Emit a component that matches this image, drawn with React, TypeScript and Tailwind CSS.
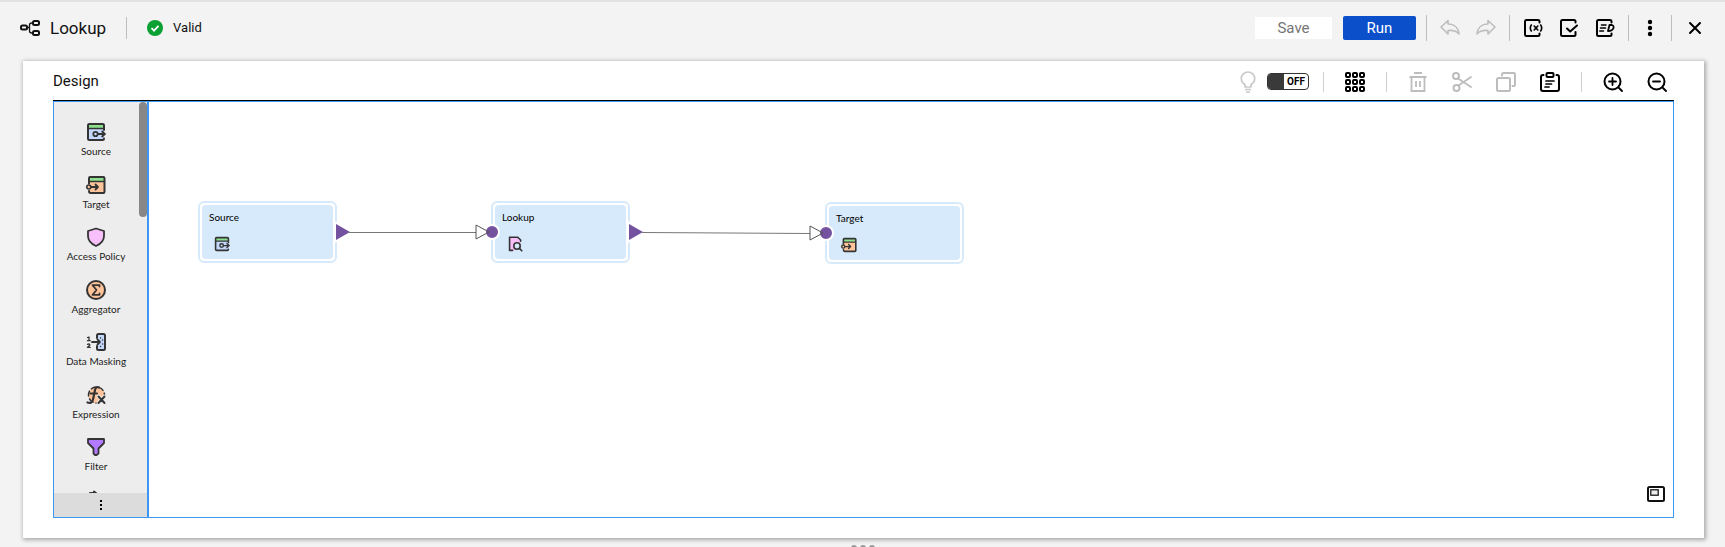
import React from "react";

type Children = { children: React.ReactNode };

function Glyph({ children, className = "size-5", box = "0 0 20 20" }: Children & { className?: string; box?: string }) {
  return (
    <svg
      viewBox={box}
      className={className}
      fill="none"
      stroke="currentColor"
      strokeWidth={2}
      strokeLinecap="round"
      strokeLinejoin="round"
      aria-hidden="true"
    >
      {children}
    </svg>
  );
}

function ToolButton({ label, disabled, children }: Children & { label: string; disabled?: boolean }) {
  return (
    <button
      type="button"
      aria-label={label}
      disabled={disabled}
      className="flex size-5 shrink-0 items-center justify-center text-black disabled:text-[#bdbdbd]"
    >
      {children}
    </button>
  );
}

function Divider({ className }: { className: string }) {
  return <span className={`w-px shrink-0 ${className}`} />;
}

const ink = "#343434";

function SourceIcon({ className }: { className?: string }) {
  return (
    <Glyph className={className}>
      <rect x="2" y="2" width="16" height="16" rx="1.5" fill="#c3d8fb" stroke="none" />
      <path d="M2 2h16v4H2z" fill="#8ee08e" stroke="none" />
      <path d="M18 8V3.2Q18 2 16.8 2H3.2Q2 2 2 3.200V16.800Q2 18 3.200 18H16.800Q18 18 18 16.500" stroke={ink} />
      <path d="M2 6.500H18" stroke={ink} strokeWidth="1.500" />
      <circle cx="9.500" cy="12" r="2.200" stroke={ink} strokeWidth="1.800" fill="#c3d8fb" />
      <path d="M12 12h7M16.200 9.500L18.800 12L16.200 14.500" stroke={ink} strokeWidth="1.800" />
    </Glyph>
  );
}

function TargetIcon({ className }: { className?: string }) {
  return (
    <Glyph className={className}>
      <rect x="3" y="2" width="15.500" height="16" rx="1.500" fill="#ffc49a" stroke="none" />
      <path d="M3 2h15v4H3z" fill="#8ee08e" stroke="none" />
      <path d="M3 8.500V3.200Q3 2 4.200 2H17.300Q18.500 2 18.500 3.200V16.800Q18.500 18 17.300 18H4.500Q3 18 3 16" stroke={ink} />
      <path d="M3 6.500H18" stroke={ink} strokeWidth="1.500" />
      <circle cx="2.800" cy="12" r="2" stroke={ink} strokeWidth="1.600" fill="#ffc49a" />
      <path d="M5 12h7M9.500 9.500L12 12L9.500 14.500" stroke={ink} strokeWidth="1.800" />
    </Glyph>
  );
}

function LookupIcon({ className }: { className?: string }) {
  return (
    <Glyph className={className}>
      <path d="M3 1.500H14L17 5V9L9 18H3z" fill="#f8bdf8" stroke="none" />
      <path d="M17 6.500V5L13.500 1.500H3.200V18H7" stroke={ink} />
      <circle cx="12.500" cy="12.500" r="4" fill="#d6eafb" stroke={ink} />
      <path d="M15.500 15.500L18.500 18.500" stroke={ink} />
    </Glyph>
  );
}

const palette: { name: string; icon: React.ReactNode }[] = [
  { name: "Source", icon: <SourceIcon className="size-5" /> },
  { name: "Target", icon: <TargetIcon className="size-5" /> },
  {
    name: "Access Policy",
    icon: (
      <Glyph>
        <path d="M10 1.500L18 4V9C18 13.500 14.500 17 10 19C5.500 17 2 13.500 2 9V4Z" fill="#f7c0fb" stroke={ink} strokeWidth="1.800" />
      </Glyph>
    ),
  },
  {
    name: "Aggregator",
    icon: (
      <Glyph>
        <circle cx="10" cy="10" r="9" fill="#ffc49a" stroke={ink} />
        <path d="M13.500 6.500V5.200H6.500L10.500 10L6.500 14.800H13.500V13.500" stroke={ink} strokeWidth="1.800" />
      </Glyph>
    ),
  },
  {
    name: "Data Masking",
    icon: (
      <Glyph>
        <rect x="11" y="2" width="8" height="16" rx="1.500" fill="#c3d8fb" stroke="none" />
        <path d="M11 6V3.500Q11 2 12.500 2H17.500Q19 2 19 3.500V16.500Q19 18 17.500 18H12.500Q11 18 11 16.500V14" stroke={ink} />
        <path d="M6 10H14M11.500 7.500L14 10L11.500 12.500" stroke={ink} strokeWidth="1.800" />
        <path d="M14.500 6h.1M16.500 8h.1M16.500 12h.1M14.500 14.500h.1" stroke={ink} strokeWidth="1.400" />
        <path d="M1.500 5.500L3 5V8.500M1.500 8.700H4.200M1.500 12.300Q4 11.500 3.800 13Q3.500 14 1.500 15.300H4.200" stroke={ink} strokeWidth="1.300" />
      </Glyph>
    ),
  },
  {
    name: "Expression",
    icon: (
      <Glyph>
        <circle cx="10.500" cy="10" r="8" fill="#ffc49a" stroke={ink} strokeWidth="1.500" strokeDasharray="5 3" />
        <path d="M13 2.500Q10 1 9 5L7 14.500Q6 19 1.500 17.500M4.500 8.500H11" stroke={ink} strokeWidth="2.200" />
        <path d="M12.500 11.500L18.500 18M18.500 11.500L12.500 18" stroke="#ededed" strokeWidth="4" />
        <path d="M12.500 11.500L18.500 18M18.500 11.500L12.500 18" stroke={ink} />
      </Glyph>
    ),
  },
  {
    name: "Filter",
    icon: (
      <Glyph>
        <path d="M2 2H18V6L12.500 11.500V16.500L10.500 18H9L7.500 16.500V11.500L2 6Z" fill="#b27bff" stroke={ink} strokeWidth="1.800" />
      </Glyph>
    ),
  },
];

const nodes = [
  { name: "Source", place: "left-[49px] top-[99px]", icon: <SourceIcon className="size-4" /> },
  { name: "Lookup", place: "left-[342px] top-[99px]", icon: <LookupIcon className="size-4" /> },
  { name: "Target", place: "left-[676px] top-[100px]", icon: <TargetIcon className="size-4" /> },
];

function OutPort({ x, y }: { x: number; y: number }) {
  return <path d={`M${x} ${y - 8}L${x + 14} ${y}L${x} ${y + 8}Z`} fill="#74529f" stroke="#fff" strokeWidth="4" paintOrder="stroke" />;
}

function InPort({ x, y }: { x: number; y: number }) {
  return (
    <g>
      <path d={`M${x - 16} ${y - 7}L${x - 3} ${y}L${x - 16} ${y + 7}Z`} fill="#fff" />
      <circle cx={x} cy={y} r="7" fill="#74529f" stroke="#fff" strokeWidth="2" />
      <path d={`M${x - 16} ${y - 7}L${x - 3} ${y}L${x - 16} ${y + 7}Z`} stroke="#555" />
    </g>
  );
}

function Canvas() {
  return (
    <div className="relative min-w-0 flex-1 overflow-hidden bg-white">
      {nodes.map((n) => (
        <div key={n.name} className={`absolute h-[62px] w-[139px] rounded-md border-2 border-[#d6eafb] bg-white p-0.5 ${n.place}`}>
          <div className="flex h-full flex-col gap-3 rounded-sm bg-[#d6eafb] px-[7px] pt-1.5 font-['Lato',sans-serif] text-[10px] leading-3 text-black">
            <span>{n.name}</span>
            <span className="pt-px pl-[5px]">{n.icon}</span>
          </div>
        </div>
      ))}
      <svg className="pointer-events-none absolute inset-0 h-full w-full" fill="none" aria-hidden="true">
        <OutPort x={187} y={130} />
        <OutPort x={480} y={130} />
        <path d="M200 130.500H328M493 130.500L662 131.500" stroke="#777" />
        <InPort x={343} y={130} />
        <InPort x={677} y={131} />
      </svg>
      <button type="button" aria-label="Overview map" className="absolute right-[7px] bottom-[13px] flex size-5 items-center justify-center">
        <Glyph>
          <rect x="2" y="3" width="16" height="14" rx="1.500" />
          <rect x="4.750" y="5.750" width="7.500" height="5.500" stroke="#333" strokeWidth="1.500" fill="#eee" />
        </Glyph>
      </button>
    </div>
  );
}

function Palette() {
  return (
    <aside className="flex w-[95px] shrink-0 flex-col border-r-2 border-[#3b97f4] bg-[#ededed]">
      <div className="relative min-h-0 flex-1 overflow-hidden">
        <ul className="mr-[9px] grid h-[440px] grid-rows-8 pt-5">
          {palette.map((p) => (
            <li key={p.name}>
              <button type="button" className="flex w-full flex-col items-center gap-[3px] font-['Lato',sans-serif] text-[10px] leading-3 whitespace-nowrap text-[#222]">
                {p.icon}
                {p.name}
              </button>
            </li>
          ))}
          <li>
            <button type="button" aria-label="Flatten" className="flex w-full justify-center">
              <Glyph>
                <path d="M4 3H10M8 1.500L10.500 3.500L8 6M10.500 3.500V9" stroke={ink} />
              </Glyph>
            </button>
          </li>
        </ul>
        <span className="absolute top-0 right-0 h-[115px] w-2 rounded-full bg-[#878787]" />
      </div>
      <button type="button" aria-label="More transformations" className="flex h-6 shrink-0 items-center justify-center bg-[#dcdcdc]">
        <svg viewBox="0 0 4 10" className="h-2.5 w-1" aria-hidden="true">
          <path d="M1 0h2v2H1zM1 4h2v2H1zM1 8h2v2H1z" />
        </svg>
      </button>
    </aside>
  );
}

function Header() {
  return (
    <header className="flex h-[61px] shrink-0 items-center border-t-2 border-[#e2e2e2] pr-5 pb-2 pl-5">
      <Glyph>
        <rect x="1" y="7.500" width="6" height="4" rx="1.500" />
        <rect x="13" y="3" width="6" height="4" rx="1.500" />
        <rect x="13" y="13" width="6" height="4" rx="1.500" />
        <path d="M12 5Q9.500 5 9.500 7V13Q9.500 15 12 15M7.500 9.500H9" strokeWidth="1.300" />
      </Glyph>
      <h1 className="ml-2.5 text-[17px] leading-6">Lookup</h1>
      <Divider className="mx-5 h-[22px] bg-[#bdbdbd]" />
      <svg viewBox="0 0 16 16" className="size-4 shrink-0" fill="none" aria-hidden="true">
        <circle cx="8" cy="8" r="8" fill="#0ba033" />
        <path d="M4.500 8.200L7 10.600L11.500 5.800" stroke="#fff" strokeWidth="1.800" />
      </svg>
      <span className="ml-2.5 text-[13px]">Valid</span>
      <div className="ml-auto flex items-center">
        <button type="button" disabled className="h-[22px] w-[77px] bg-white text-[15px] leading-[22px] text-[#757575]">
          Save
        </button>
        <button type="button" className="ml-[11px] h-6 w-[73px] rounded-xs bg-[#0b4fcb] text-[15px] leading-6 text-white">
          Run
        </button>
        <Divider className="mx-2.5 h-[26px] bg-[#bdbdbd]" />
        <div className="flex gap-4 pl-[3px]">
          <ToolButton label="Undo" disabled>
            <Glyph>
              <path d="M1 9L8 2.500V6C14.500 6 18.500 10 19 16C16.500 13 13 12 8 12.500V16Z" strokeWidth="1.600" />
            </Glyph>
          </ToolButton>
          <ToolButton label="Redo" disabled>
            <Glyph>
              <path d="M19 9L12 2.500V6C5.500 6 1.500 10 1 16C3.500 13 7 12 12 12.500V16Z" strokeWidth="1.600" />
            </Glyph>
          </ToolButton>
        </div>
        <Divider className="mx-[13px] h-[26px] bg-[#bdbdbd]" />
        <div className="flex gap-4">
          <ToolButton label="Parameters">
            <Glyph>
              <path d="M16.500 4.500V3.500Q16.500 2 15 2H3.500Q2 2 2 3.500V16.500Q2 18 3.500 18H15Q16.500 18 16.500 16.500V15.500" />
              <path d="M8.300 7Q6.300 10 8.300 13M17.700 7Q19.700 10 17.700 13M11.200 8L14.800 12M14.800 8L11.200 12" strokeWidth="1.600" />
            </Glyph>
          </ToolButton>
          <ToolButton label="Validation">
            <Glyph>
              <path d="M16.500 4.500V3.500Q16.500 2 15 2H3.500Q2 2 2 3.500V16.500Q2 18 3.500 18H15Q16.500 18 16.500 16.500V14" />
              <path d="M8 10.500L11.200 13.500L18 7.500" />
            </Glyph>
          </ToolButton>
          <ToolButton label="Data preview">
            <Glyph>
              <path d="M16.500 4.500V3.500Q16.500 2 15 2H3.500Q2 2 2 3.500V16.500Q2 18 3.500 18H15Q16.500 18 16.500 16.500V15.500" />
              <path d="M6.500 7H11M5.500 10H10.500M4.800 13H8.500" strokeWidth="1.600" />
              <path d="M14.500 7H17Q19 7.500 18.500 10Q17.500 13 13 13Z" strokeWidth="1.800" />
            </Glyph>
          </ToolButton>
        </div>
        <Divider className="mr-[11px] ml-[13px] h-[26px] bg-[#bdbdbd]" />
        <ToolButton label="More actions">
          <svg viewBox="0 0 20 20" className="size-5" fill="currentColor" aria-hidden="true">
            <circle cx="10" cy="4" r="2.200" />
            <circle cx="10" cy="10" r="2.200" />
            <circle cx="10" cy="16" r="2.200" />
          </svg>
        </ToolButton>
        <Divider className="mr-[13px] ml-[11px] h-[26px] bg-[#bdbdbd]" />
        <ToolButton label="Close">
          <Glyph>
            <path d="M5 5L15 15M15 5L5 15" />
          </Glyph>
        </ToolButton>
      </div>
    </header>
  );
}

function DesignBar() {
  return (
    <div className="flex h-10 shrink-0 items-center border-b border-black pr-[7px]">
      <h2 className="text-[15px] leading-5">Design</h2>
      <div className="ml-auto flex items-center pt-0.5">
        <label className="flex items-center gap-[9px] text-[#c9c9c9]">
          <Glyph className="h-[22px] w-5" box="0 0 20 22">
            <path d="M7 16V13.500Q3.300 11.500 3.300 7.500A6.700 6.500 0 0 1 16.700 7.500Q16.700 11.500 13 13.500V16Z" strokeWidth="1.700" />
            <path d="M7 18.500H13M8 21H12" strokeWidth="1.700" strokeLinecap="butt" />
          </Glyph>
          <input type="checkbox" role="switch" aria-label="Recommendations" className="peer sr-only" />
          <span className="flex h-[17px] w-[42px] overflow-hidden rounded-[4px] border border-[#333] bg-white text-[10px] leading-[15px] font-bold text-black">
            <span className="w-4 bg-[#3a3a3a]" />
            <span className="flex-1 text-center">OFF</span>
          </span>
        </label>
        <Divider className="mr-[21px] ml-3.5 h-5 bg-[#cfcfcf]" />
        <ToolButton label="Arrange all">
          <Glyph>
            {[3, 10, 17].map((y) =>
              [3, 10, 17].map((x) => <rect key={`${x}-${y}`} x={x - 2} y={y - 2} width="4" height="4" rx="1" />),
            )}
          </Glyph>
        </ToolButton>
        <Divider className="mx-[21px] h-5 bg-[#cfcfcf]" />
        <div className="flex gap-6">
          <ToolButton label="Delete" disabled>
            <Glyph>
              <path d="M6 1H14M1.500 5H18.500M3.500 5V19H16.500V5M8 9V15M12 9V15" strokeWidth="1.800" strokeLinecap="butt" strokeLinejoin="miter" />
            </Glyph>
          </ToolButton>
          <ToolButton label="Cut" disabled>
            <Glyph>
              <circle cx="4" cy="4" r="3" />
              <circle cx="4.500" cy="16" r="3" />
              <path d="M6 6.500L19 15M6.500 13.500L19 5" strokeWidth="1.800" />
            </Glyph>
          </ToolButton>
          <ToolButton label="Copy" disabled>
            <Glyph>
              <rect x="1" y="6" width="13" height="13" rx="1.500" />
              <path d="M6 3.500V2.500Q6 1 7.500 1H17.500Q19 1 19 2.500V12.500Q19 14 17.500 14H16.500" />
            </Glyph>
          </ToolButton>
          <ToolButton label="Paste">
            <Glyph>
              <path d="M3.500 3H3Q1 3 1 5V17Q1 19 3 19H17Q19 19 19 17V5Q19 3 17 3H16.500" />
              <rect x="6.500" y="1" width="7" height="4" rx="1" />
              <path d="M6 9H14M6 12H11.500M5 15H9" strokeWidth="1.700" />
            </Glyph>
          </ToolButton>
        </div>
        <Divider className="mx-[21px] h-5 bg-[#cfcfcf]" />
        <div className="flex gap-6">
          <ToolButton label="Zoom in">
            <Glyph>
              <circle cx="9.500" cy="9.500" r="8" />
              <path d="M15.500 15.500L19 19M6 9.500H13M9.500 6V13" strokeWidth="1.800" />
            </Glyph>
          </ToolButton>
          <ToolButton label="Zoom out">
            <Glyph>
              <circle cx="9.500" cy="9.500" r="8" />
              <path d="M15.500 15.500L19 19M6 9.500H13" strokeWidth="1.800" />
            </Glyph>
          </ToolButton>
        </div>
      </div>
    </div>
  );
}

export default function App() {
  return (
    <div className="flex h-screen flex-col overflow-hidden bg-[#f3f3f3] font-['Roboto',sans-serif] text-[#111]">
      <Header />
      <main className="mr-[21px] ml-[23px] flex min-h-0 flex-1 flex-col bg-white px-[30px] pb-5 shadow-[1px_1px_4px_1px_rgba(0,0,0,0.3)]">
        <DesignBar />
        <div className="flex min-h-0 flex-1 border border-[#3b97f4]">
          <Palette />
          <Canvas />
        </div>
      </main>
      <footer className="flex h-[9px] shrink-0 justify-center gap-[3px] overflow-hidden pt-[7px]">
        <span className="size-1.5 rounded-full bg-[#999]" />
        <span className="size-1.5 rounded-full bg-[#999]" />
        <span className="size-1.5 rounded-full bg-[#999]" />
      </footer>
    </div>
  );
}
